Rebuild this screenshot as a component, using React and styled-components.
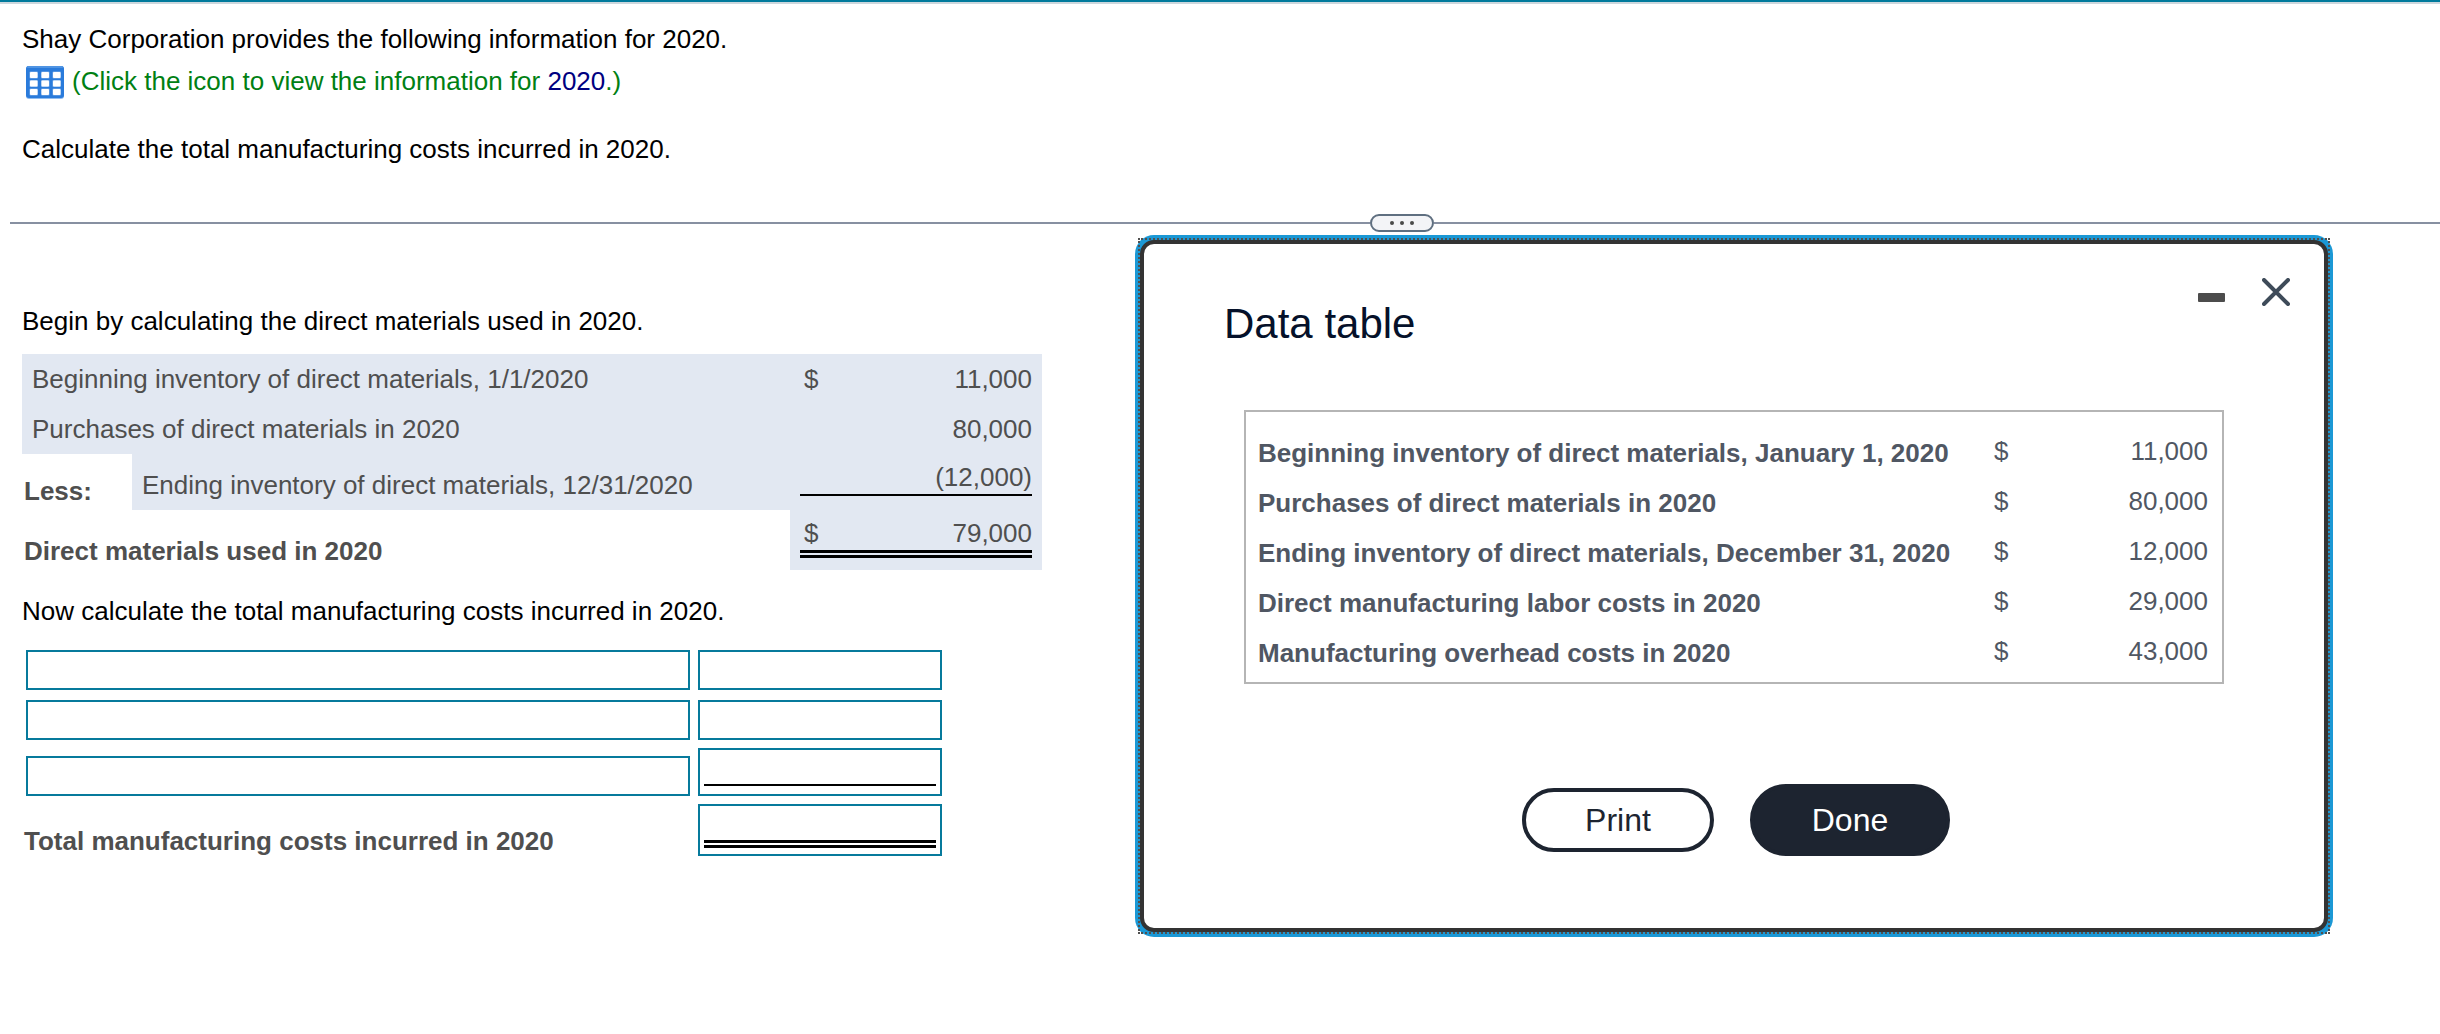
import React, { useState } from 'react';
import styled, { createGlobalStyle } from 'styled-components';

const GlobalStyle = createGlobalStyle`
  * {
    box-sizing: border-box;
  }

  body {
    margin: 0;
    background: #fff;
    color: #000;
    font-family: "Liberation Sans", Arial, Helvetica, sans-serif;
    font-size: 26px;
    line-height: 30px;
  }

  button, input {
    font: inherit;
    color: inherit;
  }
`;

const Page = styled.div`
  border-top: 2px solid #007a9c;
`;

const Intro = styled.header`
  border-top: 2px solid #ccd7dd;
  padding: 20px 22px 50px;
`;

const Text = styled.p`
  margin: 0;
`;

const IconRow = styled.div`
  display: flex;
  align-items: flex-start;
  gap: 8px;
  margin: 12px 0 35px 4px;
  color: #008013;
`;

const IconButton = styled.button`
  display: block;
  padding: 0;
  border: none;
  background: none;
  cursor: pointer;

  svg {
    display: block;
  }
`;

const YearLink = styled.a`
  color: #000080;
  text-decoration: none;
`;

const Divider = styled.div`
  display: flex;
  align-items: center;
  margin-left: 10px;
`;

const Line = styled.div`
  flex: ${(props) => props.$grow} 1 0;
  height: 2px;
  background: #8790a1;
`;

const Handle = styled.button`
  display: flex;
  align-items: center;
  justify-content: center;
  gap: 6px;
  width: 64px;
  height: 18px;
  padding: 0;
  border: 2px solid #5f6f80;
  border-radius: 9px;
  background: #f3f4f7;
  cursor: row-resize;
`;

const Dot = styled.span`
  width: 4px;
  height: 4px;
  border-radius: 50%;
  background: #4a4a4a;
`;

const Workspace = styled.main`
  display: grid;
  grid-template-columns: minmax(0, 1020px) minmax(0, 1188px);
  align-items: start;
  gap: 98px;
  padding: 8px 22px 40px;
`;

const Work = styled.section`
  padding-top: 66px;
`;

const Statement = styled.table`
  width: 100%;
  margin: 18px 0 26px;
  table-layout: fixed;
  border-collapse: collapse;
  color: #4f4f4f;
`;

const Filled = styled.td`
  padding: 10px;
  background: #e2e8f2;
  vertical-align: bottom;
`;

const Heading = styled.th`
  padding: 0 2px 4px;
  text-align: left;
  vertical-align: bottom;
`;

const AmountCell = styled.td`
  padding: ${(props) => (props.$rule ? '8px 10px 0' : '10px')};
  background: #e2e8f2;
  vertical-align: top;
  height: ${(props) => props.$height || 50}px;
`;

const rules = {
  single: '2px solid #000',
  double: '8px double #000',
};

const Amount = styled.div`
  display: flex;
  justify-content: space-between;
  padding: 0 0 2px 4px;
  border-bottom: ${(props) => rules[props.$rule] || 'none'};
  margin-bottom: ${(props) => (props.$rule ? 0 : -2)}px;
`;

const Entries = styled.form`
  display: grid;
  grid-template-columns: minmax(0, 666fr) minmax(0, 244fr);
  grid-template-rows: 42px 42px 48px 52px;
  align-items: end;
  gap: 8px;
  max-width: 918px;
  margin: 22px 0 0 2px;
`;

const Field = styled.div`
  display: flex;
  height: ${(props) => props.$height || 40}px;
  margin-left: ${(props) => (props.$wide ? 2 : 0)}px;
  padding: 0 4px ${(props) => props.$bottom || 0}px;
  border: 2px solid #077a9c;
`;

const Input = styled.input`
  flex: 1;
  min-width: 0;
  padding: 0 4px;
  border: none;
  border-bottom: ${(props) => rules[props.$rule] || 'none'};
  outline: none;
  background: transparent;
  text-align: ${(props) => (props.$number ? 'right' : 'left')};
`;

const TotalLabel = styled.label`
  color: #4f4f4f;
  font-weight: bold;
`;

const Dialog = styled.section`
  position: relative;
  border: 4px solid #333;
  border-radius: 14px;
  background: #fff;
  box-shadow: 0 0 0 5px #1b98d5;
  color: #505763;

  /* focus ring, square at the corners */
  &::after {
    content: '';
    position: absolute;
    inset: -6px;
    border: 2px dotted #505050;
    pointer-events: none;
  }
`;

const DialogHeader = styled.div`
  display: flex;
  justify-content: space-between;
  align-items: flex-start;
  padding: 34px 34px 0 80px;
`;

const Title = styled.h2`
  margin: 0;
  padding-top: 22px;
  color: #05112a;
  font-size: 42px;
  font-weight: normal;
  line-height: 48px;
`;

const Controls = styled.div`
  display: flex;
  gap: 36px;
`;

const DataFrame = styled.div`
  margin: 62px 100px 0;
  padding: 16px 0 4px;
  border: 2px solid #b5b5b5;
`;

const DataGrid = styled.table`
  width: 100%;
  table-layout: fixed;
  border-collapse: collapse;

  th {
    height: 50px;
    padding: 10px 0 10px 12px;
    text-align: left;
    white-space: nowrap;
  }

  td {
    padding: 8px 0 12px;
  }

  td:last-child {
    padding-right: 14px;
    text-align: right;
  }
`;

const Footer = styled.div`
  display: flex;
  justify-content: center;
  align-items: center;
  gap: 36px;
  padding: 100px 80px 72px 84px;
`;

const Button = styled.button`
  width: ${(props) => (props.$primary ? 200 : 192)}px;
  height: ${(props) => (props.$primary ? 72 : 64)}px;
  padding: 0;
  border: 4px solid #1d2430;
  border-radius: 36px;
  background: ${(props) => (props.$primary ? '#1d2430' : '#fff')};
  color: ${(props) => (props.$primary ? '#fff' : '#1d2430')};
  font-size: 32px;
  line-height: 36px;
  cursor: pointer;
`;

const costs = [
  { label: 'Beginning inventory of direct materials, January 1, 2020', value: '11,000' },
  { label: 'Purchases of direct materials in 2020', value: '80,000' },
  { label: 'Ending inventory of direct materials, December 31, 2020', value: '12,000' },
  { label: 'Direct manufacturing labor costs in 2020', value: '29,000' },
  { label: 'Manufacturing overhead costs in 2020', value: '43,000' },
];

const entryRows = [
  { id: 'first' },
  { id: 'second' },
  { id: 'third', height: 48, bottom: 8, rule: 'single' },
];

const TableIcon = () => (
  <svg width="38" height="33" viewBox="0 0 38 33" aria-hidden="true">
    <rect width="38" height="33" rx="3" fill="#8fbcf0" />
    <rect width="38" height="32" rx="3" fill="#2a7bdb" />
    <rect x="1" width="36" height="2" rx="1" fill="#4f94e3" />
    {[6, 14.5, 23].map((y) =>
      [4, 15.5, 27].map((x) => (
        <g key={`${x}-${y}`} fill="#fff">
          <rect x={x - 0.5} y={y - 0.5} width="8.5" height="7" rx="1" opacity="0.4" />
          <rect x={x} y={y} width="7.5" height="6" rx="1" />
        </g>
      ))
    )}
  </svg>
);

const App = () => {
  const [open, setOpen] = useState(true);
  const [values, setValues] = useState({});

  const handleChange = (e) => {
    setValues({ ...values, [e.target.name]: e.target.value });
  };

  return (
    <Page>
      <GlobalStyle />
      <Intro>
        <Text>Shay Corporation provides the following information for 2020.</Text>
        <IconRow>
          <IconButton type="button" aria-label="Data table" onClick={() => setOpen(true)}>
            <TableIcon />
          </IconButton>
          <Text>
            (Click the icon to view the information for <YearLink href="#data">2020</YearLink>.)
          </Text>
        </IconRow>
        <Text>Calculate the total manufacturing costs incurred in 2020.</Text>
      </Intro>

      <Divider>
        <Line $grow={23} />
        <Handle type="button" aria-label="Resize">
          <Dot />
          <Dot />
          <Dot />
        </Handle>
        <Line $grow={17} />
      </Divider>

      <Workspace>
        <Work>
          <Text>Begin by calculating the direct materials used in 2020.</Text>
          <Statement>
            <colgroup>
              <col width="110" />
              <col />
              <col width="252" />
            </colgroup>
            <tbody>
              <tr>
                <Filled colSpan={2}>Beginning inventory of direct materials, 1/1/2020</Filled>
                <AmountCell>
                  <Amount><span>$</span><span>11,000</span></Amount>
                </AmountCell>
              </tr>
              <tr>
                <Filled colSpan={2}>Purchases of direct materials in 2020</Filled>
                <AmountCell>
                  <Amount><span /><span>80,000</span></Amount>
                </AmountCell>
              </tr>
              <tr>
                <Heading scope="row">Less:</Heading>
                <Filled>Ending inventory of direct materials, 12/31/2020</Filled>
                <AmountCell $rule $height={56}>
                  <Amount $rule="single"><span /><span>(12,000)</span></Amount>
                </AmountCell>
              </tr>
              <tr>
                <Heading scope="row" colSpan={2}>Direct materials used in 2020</Heading>
                <AmountCell $rule $height={60}>
                  <Amount $rule="double"><span>$</span><span>79,000</span></Amount>
                </AmountCell>
              </tr>
            </tbody>
          </Statement>

          <Text>Now calculate the total manufacturing costs incurred in 2020.</Text>
          <Entries onSubmit={(e) => e.preventDefault()}>
            {entryRows.map((row) => (
              <React.Fragment key={row.id}>
                <Field $wide>
                  <Input
                    type="text"
                    name={`${row.id}Label`}
                    aria-label={`Cost item, ${row.id} row`}
                    value={values[`${row.id}Label`] || ''}
                    onChange={handleChange}
                  />
                </Field>
                <Field $height={row.height} $bottom={row.bottom}>
                  <Input
                    type="text"
                    $number
                    $rule={row.rule}
                    name={`${row.id}Amount`}
                    aria-label={`Amount, ${row.id} row`}
                    value={values[`${row.id}Amount`] || ''}
                    onChange={handleChange}
                  />
                </Field>
              </React.Fragment>
            ))}
            <TotalLabel htmlFor="total">Total manufacturing costs incurred in 2020</TotalLabel>
            <Field $height={52} $bottom={6}>
              <Input
                type="text"
                id="total"
                $number
                $rule="double"
                name="total"
                value={values.total || ''}
                onChange={handleChange}
              />
            </Field>
          </Entries>
        </Work>

        {open && (
          <Dialog role="dialog" aria-labelledby="data" tabIndex={-1}>
            <DialogHeader>
              <Title id="data">Data table</Title>
              <Controls>
                <IconButton type="button" aria-label="Minimize">
                  <svg width="28" height="28" viewBox="0 0 28 28">
                    <rect y="15" width="27" height="9" rx="1" fill="#4c4c4c" />
                  </svg>
                </IconButton>
                <IconButton type="button" aria-label="Close" onClick={() => setOpen(false)}>
                  <svg width="28" height="28" viewBox="0 0 28 28">
                    <path d="M2 2L26 26M26 2L2 26" stroke="#3e4b59" strokeWidth="4" strokeLinecap="round" />
                  </svg>
                </IconButton>
              </Controls>
            </DialogHeader>

            <DataFrame>
              <DataGrid>
                <colgroup>
                  <col />
                  <col width="60" />
                  <col width="168" />
                </colgroup>
                <tbody>
                  {costs.map((cost) => (
                    <tr key={cost.label}>
                      <th scope="row">{cost.label}</th>
                      <td>$</td>
                      <td>{cost.value}</td>
                    </tr>
                  ))}
                </tbody>
              </DataGrid>
            </DataFrame>

            <Footer>
              <Button type="button" onClick={() => window.print()}>Print</Button>
              <Button type="button" $primary onClick={() => setOpen(false)}>Done</Button>
            </Footer>
          </Dialog>
        )}
      </Workspace>
    </Page>
  );
};

export default App;
